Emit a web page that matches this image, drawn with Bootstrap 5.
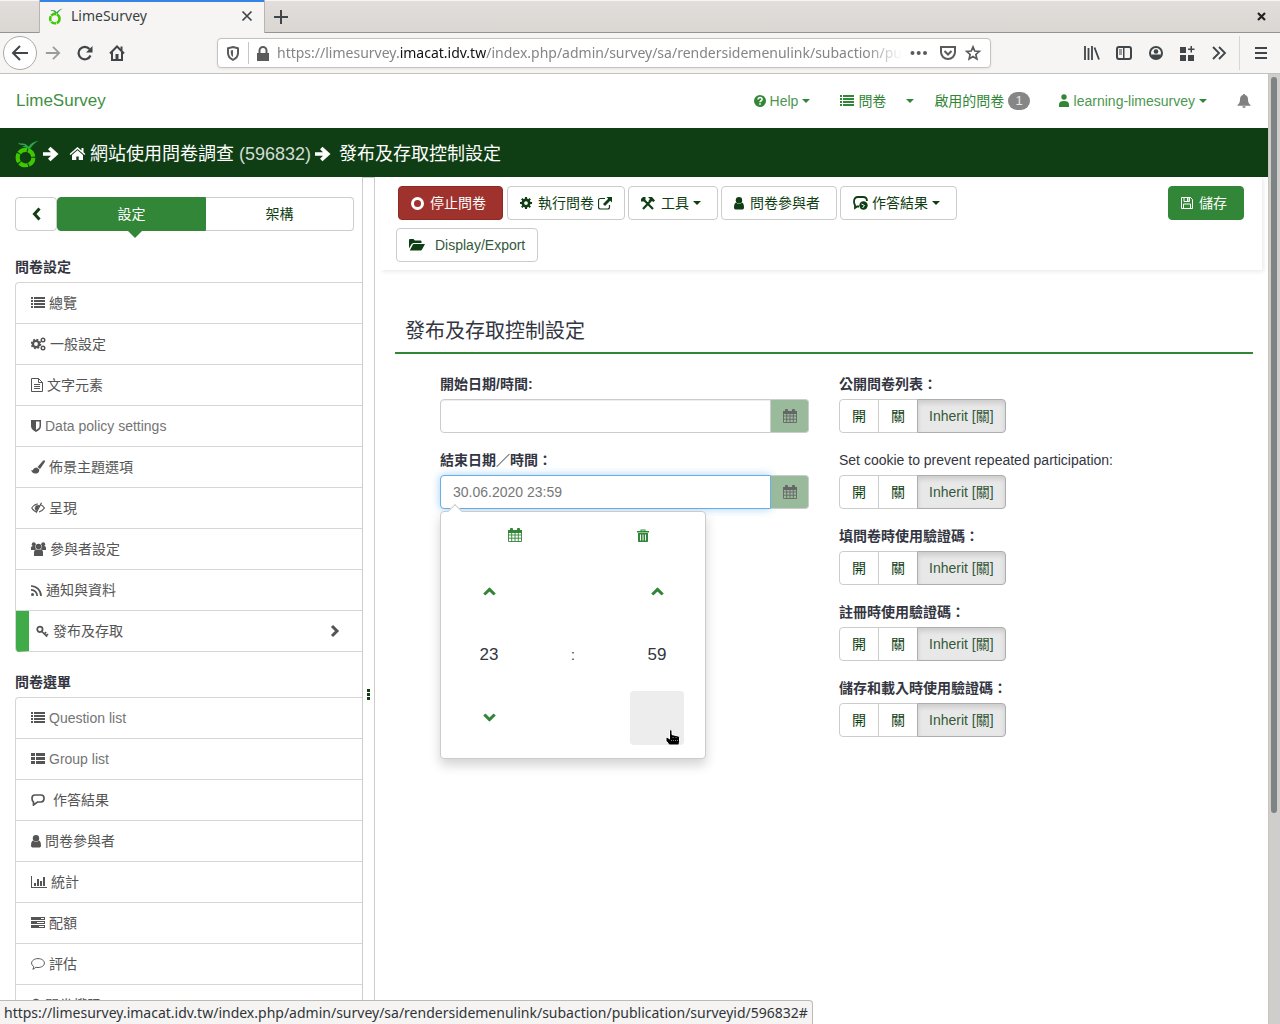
<!DOCTYPE html>
<html lang="zh-Hant">
<head>
<meta charset="utf-8">
<meta name="viewport" content="width=device-width, initial-scale=1">
<title>LimeSurvey</title>
<link href="https://cdn.jsdelivr.net/npm/bootstrap@5.3.0/dist/css/bootstrap.min.css" rel="stylesheet">
<style>
:root{--g:#328637;--dark:#103e14;--line:#ccc}
body{font:400 14px/20px "Liberation Sans","Noto Sans CJK TC",sans-serif;color:#333641;background:#fff}
svg{fill:currentColor;flex:none;display:block}
a{text-decoration:none}
/* browser frame */
.chrome-font{font-family:"Noto Sans","Noto Sans CJK TC",sans-serif;font-size:14px}
.tabstrip{height:33px;background:linear-gradient(#e1dedb,#dad6d2);border-bottom:1px solid #929595;border-top:1px solid #f6f5f4;padding:0 14px 0 39px}
.tab-item{width:226px;height:33px;margin-top:-1px;background:#f6f5f4;border:solid #b8b4b0;border-width:0 1px;box-shadow:inset 0 2px #3584e4;color:#3a3f42;padding:0 10px 0 8px;z-index:1}
.tabstrip button,.toolbar button{border:0;background:none;padding:0;color:#3f4548;flex:none}
.toolbar{height:41px;background:#f6f5f4;border-bottom:1px solid #c4c0bc;color:#4a4f52;padding:0 13px 0 3px}
.toolbar .back-btn{width:34px;height:34px;border:1px solid #aaa;border-radius:50%;background:#fff;display:grid;place-items:center}
.urlbar{height:30px;min-width:0;margin:0 93px 0 92px;background:#fff;border:1px solid #c6c1bc;border-radius:4px;color:#5b5b5b;box-shadow:0 1px 3px #0001}
.url-text{flex:1 1 0;color:#858585;white-space:nowrap;overflow:hidden;min-width:0;-webkit-mask:linear-gradient(90deg,#000 calc(100% - 36px),transparent);mask:linear-gradient(90deg,#000 calc(100% - 36px),transparent)}
.url-text b{font-weight:400;color:#111}
.vsep{width:1px;height:22px;background:#c9c5c1}
.vsep-tall{height:34px;margin:0 15px 0 12px;background:#d8d5d2}
.track{width:12px;background:#d0cecc;border-left:1px solid #c9c3b8;padding:3px 3px 0 2px}
.thumb{height:736px;background:#7e8384;border-radius:4px}
.status-tip{bottom:0;left:0;height:24px;line-height:24px;background:#f5f4f3;border:solid #bdb9b4;border-width:1px 1px 0 0;border-radius:0 4px 0 0;padding:0 4px;color:#303537;z-index:20;white-space:nowrap}
/* application */
.topnav{height:54px;padding:0 17px 0 16px;color:var(--g)}
.topnav a{color:var(--g);display:flex;align-items:center;gap:4px}
.topnav .latin{color:#4c9750}
.topnav .brand-link{font-size:17px;color:#3f8f44}
.tri{width:8px;height:4px}
.count-pill{background:#868686;border-radius:10px;font-size:13px;font-weight:400;padding:3px 7px;line-height:12px;height:18px;color:#e6e6e6}
.crumbs{height:49px;background:var(--dark);color:#fff;font-size:18px;padding:3px 0 0 14px}
.crumbs a{color:#fff}
.crumbs .latin{color:#d3dcd4}
.side{width:362px;padding:20px 0 0 15px;overflow:hidden}
.bt{height:34px;border:1px solid var(--line);border-radius:4px;background:#fff;color:var(--dark);font:inherit;padding:0 12px;display:inline-flex;align-items:center;justify-content:center;white-space:nowrap}
.bt:hover{color:var(--dark)}
.bt .latin{color:#34593a}
.bt-on{background:var(--g);border-color:var(--g);color:#fff}
.bt-stop{background:#9f322d;border-color:#8e2a26;color:#fff}
.seg{flex:1}
.seg-on::after{content:"";position:absolute;top:100%;left:50%;margin-left:-5px;border:8px solid transparent;border-top-color:var(--g);border-bottom:0}
.side-title{font-weight:700;margin:0;font-size:14px;line-height:20px}
.side-list{border:solid #d6d6d6;border-width:1px 0 0 1px;border-radius:4px 0 0 4px;overflow:hidden}
.side-list a{height:41px;border-bottom:1px solid #d6d6d6;display:flex;align-items:center;gap:4px;padding-left:15px;color:#555}
.side-list .latin{color:#747474}
.side-list a.cur{border-left:13px solid #41ab49;padding:0 22px 0 7px}
.splitter{width:13px;border:1px solid var(--line);border-bottom:0;color:var(--dark)}
.dots{margin-top:186px}
.actions{margin:0 6px 0 5px;padding:9px 18px 8px 16px;box-shadow:2px 2px 4px #00000014}
.ic{margin-right:6px}
.heading{font-size:20px;line-height:24px;font-weight:400;margin:49px 15px 0 20px;padding:0 10px 9px;border-bottom:2px solid var(--g)}
.form-grid{padding:20px 30px 0 65px}
.col-dates{flex:0 0 369px;margin-right:30px}
.lab{font-weight:700;display:block;line-height:20px;margin-bottom:5px}
.blk{margin-bottom:17px}
.form-grid .form-control{height:34px;border-color:var(--line);border-radius:4px 0 0 4px;font:inherit;color:#777;padding:0 12px;box-shadow:inset 0 1px 1px #00000013}
.form-grid .form-control.focused{border-color:#66afe9;box-shadow:0 0 8px #66afe999}
.date-btn{flex:none;width:38px;padding:0;background:#9aba9c;border-radius:0 4px 4px 0;border-left:0;color:#666}
.opt{padding:0 12px}
.opt-mid{margin-left:-1px}
.opt-last{padding:0 11px}
.btn-check:checked+.opt{background:#e8e8e8;border-color:#adadad;box-shadow:inset 0 3px 5px #00000020}
.picker{top:61px;left:0;width:266px;background:#fff;border:1px solid #ccc;border-radius:4px;box-shadow:0 6px 12px #0000002d;padding:0 6px 9px;z-index:5}
.picker::before{content:"";position:absolute;left:9px;top:-6px;width:10px;height:10px;background:#fff;border:solid #ccc;border-width:1px 0 0 1px;transform:rotate(45deg)}
.picker button{border:0;background:none;color:var(--g);padding:0;display:grid;place-items:center}
.pick-top{height:46px;padding-left:3px;margin:0 -7px 2px 0}
.pick-grid{display:grid;grid-template-columns:repeat(3,1fr);grid-auto-rows:63px;place-items:center}
.pick-grid button{width:54px;height:54px;border-radius:4px}
.pick-grid .hov{background:#ededed}
.num{font-size:17px}
.hand{left:224px;top:217px;z-index:6;color:#000}
</style>
</head>
<body class="vh-100 d-flex flex-column overflow-hidden position-relative">
<svg width="0" height="0" class="position-absolute">
<defs>
<symbol id="lime" viewBox="0 0 24 26"><path d="M11 5C7 4 5 5 4 2c3 2 5 0 8 2l2 2C16 3 19 1 24 0c-4 2-7 5-9 9-2-2-5-3-8-3z" fill="#2ba54a"/><circle cx="11" cy="16.500" r="7.500" fill="none" stroke="#3fc700" stroke-width="4" stroke-dasharray="8.400 1"/></symbol>
<symbol id="list" viewBox="0 0 14 12"><path d="M0 0h2v2H0zM3 0h11v2H3zM0 3h2v2H0zM3 3h11v2H3zM0 6h2v2H0zM3 6h11v2H3zM0 9h2v2H0zM3 9h11v2H3z"/></symbol>
<symbol id="thlist" viewBox="0 0 14 12"><path d="M0 0h4v3H0zM5 0h9v3H5zM0 4h4v3H0zM5 4h9v3H5zM0 8h4v3H0zM5 8h9v3H5z"/></symbol>
<symbol id="tri" viewBox="0 0 8 4"><path d="M0 0h8L4 4z"/></symbol>
<symbol id="user" viewBox="0 0 10 13"><circle cx="5" cy="3.200" r="3.200"/><path d="M2 5.500C.6 6.200 0 8 0 10.500 0 12 .8 12.600 2 12.600h6c1.200 0 2-.6 2-2.100 0-2.500-.6-4.300-2-5-.8.900-2 1.300-3 1.300s-2.200-.4-3-1.300z"/></symbol>
<symbol id="user2" viewBox="0 0 12 14"><circle cx="6" cy="3" r="2.700"/><path d="M1 13v-2.500C1 8 2.700 7 6 7s5 1 5 3.500V13z"/></symbol>
<symbol id="arrow" viewBox="0 0 16 16"><path d="M0 6.300h8L5 3.200 7.500.7 15.500 8l-8 7.300L5 12.800l3-3.100H0z"/></symbol>
<symbol id="home" viewBox="0 0 16 14"><path d="M8 0 0 7l1 1 7-6 7 6 1-1-2-1.800V1h-2v2.400zM8 3.300l-5.500 4.800V13H6.800V9.500h2.400V13h4.300V8.100z"/></symbol>
<symbol id="gear" viewBox="0 0 16 16"><circle cx="8" cy="8" r="4.300" fill="none" stroke="currentColor" stroke-width="3.600"/><path d="M6.600 0h2.800v3H6.600zM6.600 13h2.800v3H6.600zM0 6.600h3v2.800H0zM13 6.600h3v2.800h-3zM1.400 3.300l1.900-1.900 2 2-1.900 1.900zM10.700 12.600l1.900-1.900 2 2-1.900 1.900zM1.400 12.700l2-2 1.900 1.900-2 2zM10.700 3.400l2-2 1.900 1.900-2 2z"/></symbol>
<symbol id="cogs" viewBox="0 0 15 14"><circle cx="5" cy="7" r="3.100" fill="none" stroke="currentColor" stroke-width="2.400"/><circle cx="5" cy="7" r="4.600" fill="none" stroke="currentColor" stroke-width="1.400" stroke-dasharray="1.900 1.700"/><circle cx="12" cy="3" r="1.800" fill="none" stroke="currentColor" stroke-width="1.400"/><circle cx="12" cy="11" r="1.800" fill="none" stroke="currentColor" stroke-width="1.400"/></symbol>
<symbol id="file" viewBox="0 0 12 14"><path d="M.5.500h7l4 4v9H.5zM7.500.500v4h4M3 6.500h6M3 8.500h6M3 10.500h6" fill="none" stroke="currentColor"/></symbol>
<symbol id="shield" viewBox="0 0 10 12"><path d="M0 0h10v6c0 3-2 4.500-5 6-3-1.500-5-3-5-6zm5 1.500V10c2-1.200 3.500-2.200 3.500-4V1.500z" fill-rule="evenodd"/></symbol>
<symbol id="brush" viewBox="0 0 14 14"><path d="M13.500.3c.8.600.4 1.500 0 2.200L9 9 6.500 7 12 .8c.5-.5 1-.8 1.500-.5zM5.800 7.600l2.500 2c.2 2.800-1.800 4-4 4C2 13.600.6 12 0 9.800c1 .8 1.600.8 2.200-.2.700-1.300 2-2 3.600-2z"/></symbol>
<symbol id="eye" viewBox="0 0 14 12"><path d="M.7 6C3 2.800 5 2 7 2M6 10C3.500 9.700 2 8 .7 6M9 2.500C11 3 12.400 4.500 13.400 6 12 8 10.500 9.500 8 10M10.500.8 5 11M4.200 5.500c0 1.600.6 2.300 1.500 2.800" fill="none" stroke="currentColor" stroke-width="1.200"/><path d="M4.500 3.500 9 3 6 8.500C4.500 7.500 4 5.500 4.500 3.500z"/></symbol>
<symbol id="users" viewBox="0 0 15 14"><circle cx="7.500" cy="4.500" r="2.800"/><path d="M3 14V10.500c0-2 1-3 2.500-3h4c1.500 0 2.500 1 2.500 3V14z"/><circle cx="2.800" cy="2.200" r="2"/><circle cx="12.200" cy="2.200" r="2"/><path d="M0 8V6c0-1.300.7-2 2-2h2.300c0 2 .5 2.700 1 3.200L3.800 8zM15 8V6c0-1.300-.7-2-2-2h-2.300c0 2-.5 2.700-1 3.200l1.500.8z"/></symbol>
<symbol id="rss" viewBox="0 0 11 11"><circle cx="1.500" cy="9.500" r="1.500"/><path d="M0 4.800A6 6 0 0 1 6.200 11M0 1a10 10 0 0 1 10 10" fill="none" stroke="currentColor" stroke-width="1.700"/></symbol>
<symbol id="key" viewBox="0 0 14 13"><circle cx="4.200" cy="4.200" r="2.900" fill="none" stroke="currentColor" stroke-width="1.900"/><path d="m6 6.200 6 5.800M9 9l2-1.800M11 11l2-1.800" fill="none" stroke="currentColor" stroke-width="1.700"/></symbol>
<symbol id="bubble" viewBox="0 0 14 12"><path d="M4 1h6c2 0 3 1.200 3 3.200S12 8 10 8H6.500L2.500 11V8C1.500 7.300 1 6 1 4.200 1 2.200 2 1 4 1z" fill="none" stroke="currentColor" stroke-width="1.700"/></symbol>
<symbol id="bubble2" viewBox="0 0 14 12"><path d="M7 .6c3.600 0 6.400 2 6.400 4.500S10.600 9.500 7 9.500c-.8 0-1.500 0-2.200-.3C4 10.500 3 11 1.800 11.200c.7-.8 1-1.600 1-2.600C1.500 7.700.6 6.500.6 5.100.6 2.600 3.400.6 7 .6z" fill="none" stroke="currentColor"/></symbol>
<symbol id="chart" viewBox="0 0 16 12"><path d="M0 0h1v11h15v1H0zM3 7h2v3H3zM6 3h2v7H6zM9 5h2v5H9zM12 1h2v9h-2z"/></symbol>
<symbol id="tasks" viewBox="0 0 14 12"><path d="M0 0h14v3H0zm10 1v1h3V1zM0 4h14v3H0zm6 1v1h7V5zM0 8h14v3H0zm8 1v1h5V9z" fill-rule="evenodd"/></symbol>
<symbol id="lockp" viewBox="0 0 10 14"><path d="M1 7h8v6H1z"/><path d="M2.500 7V4a2.500 2.500 0 0 1 5 0v3" fill="none" stroke="currentColor" stroke-width="1.600"/></symbol>
<symbol id="cal" viewBox="0 0 14 14"><path d="M.5 3v10.500h13V3M.5 7h13M.5 10.200h13M3.700 4v9.500M7 4v9.500M10.300 4v9.500" fill="none" stroke="currentColor" stroke-width=".9"/><path d="M0 2h2V.8C2 .3 2.500 0 3.500 0S5 .3 5 .8V2h4V.8C9 .3 9.500 0 10.500 0S12 .3 12 .8V2h2v3H0z"/></symbol>
<symbol id="trash" viewBox="0 0 12 13"><path d="M0 2h3.500V.5h5V2H12v1.500H0zm4.500-.5V2h3v-.5zM1 4h10v8c0 .6-.4 1-1 1H2c-.6 0-1-.4-1-1zm2 1.500v6h1v-6zm2.500 0v6h1v-6zm2.500 0v6h1v-6z" fill-rule="evenodd"/></symbol>
<symbol id="up" viewBox="0 0 12 8"><path d="m1.200 6.800 4.800-4.800 4.800 4.800" fill="none" stroke="currentColor" stroke-width="2.800"/></symbol>
<symbol id="down" viewBox="0 0 12 8"><path d="M1.200 1.200 6 6l4.800-4.800" fill="none" stroke="currentColor" stroke-width="2.800"/></symbol>
</defs>
</svg>

<header class="chrome-font flex-shrink-0">
  <div class="tabstrip d-flex align-items-center">
    <div class="tab-item d-flex align-items-center">
      <svg width="15" height="17" viewBox="0 0 24 26" class="me-2"><use href="#lime"/></svg>LimeSurvey
      <button class="ms-auto" aria-label="Close tab"><svg width="14" height="14" viewBox="0 0 14 14"><path d="m2.500 2.500 9 9m0-9-9 9" stroke="currentColor" stroke-width="1.700"/></svg></button>
    </div>
    <button class="ms-2" aria-label="New tab"><svg width="16" height="16" viewBox="0 0 16 16"><path d="M8 1v14M1 8h14" stroke="currentColor" stroke-width="2"/></svg></button>
    <button class="ms-auto" aria-label="Close window"><svg width="9" height="9" viewBox="0 0 9 9"><path d="m1 1 7 7m0-7L1 8" stroke="#222" stroke-width="2.200"/></svg></button>
  </div>
  <div class="toolbar d-flex align-items-center">
    <button class="back-btn" aria-label="Back"><svg width="18" height="16" viewBox="0 0 18 16"><path d="M9 1 2 8l7 7M2 8h15" fill="none" stroke="currentColor" stroke-width="2"/></svg></button>
    <button class="ms-2 opacity-50" aria-label="Forward"><svg width="16" height="16" viewBox="0 0 18 16"><path d="m9 1 7 7-7 7m7-7H1" fill="none" stroke="currentColor" stroke-width="2"/></svg></button>
    <button class="ms-3" aria-label="Reload"><svg width="16" height="16" viewBox="0 0 16 16"><path d="M13.500 10.500A6.200 6.200 0 1 1 12.500 4" fill="none" stroke="currentColor" stroke-width="2.200"/><path d="M15.500 1v6.500H9z"/></svg></button>
    <button class="ms-3" aria-label="Home"><svg width="16" height="16" viewBox="0 0 16 16"><path d="m1 8.500 7-7 7 7M3 7v8h10V7" fill="none" stroke="currentColor" stroke-width="2"/><path d="M6.500 9h3v6h-3zM11.500 1.500h2v4h-2z"/></svg></button>
    <div class="urlbar d-flex align-items-center flex-grow-1 px-2">
      <svg width="14" height="15" viewBox="0 0 14 15"><path d="M7 1l5 1.300V7c0 3.500-2 5.500-5 6.800C4 12.500 2 10.500 2 7V2.300z" fill="none" stroke="currentColor" stroke-width="2"/><path d="M7 4v7C5.500 10 4.800 8.500 4.800 7V4.500z"/></svg>
      <span class="vsep mx-2"></span>
      <svg width="12" height="15" viewBox="0 0 12 15"><path d="M0 7h12v8H0z"/><path d="M2.500 8V4.500a3.500 3.500 0 0 1 7 0V8" fill="none" stroke="currentColor" stroke-width="2"/></svg>
      <div class="url-text ms-2" role="textbox" aria-label="Address">https://limesurvey.<b>imacat.idv.tw</b>/index.php/admin/survey/sa/rendersidemenulink/subaction/publication/surveyid/596832</div>
      <div class="d-flex align-items-center gap-2 ms-2">
        <svg width="18" height="4" viewBox="0 0 18 4" class="me-1"><circle cx="2.500" cy="2" r="2"/><circle cx="8.700" cy="2" r="2"/><circle cx="15" cy="2" r="2"/></svg>
        <svg width="16" height="14" viewBox="0 0 16 14"><path d="M1 1h14v5a7 7 0 0 1-14 0zM4.500 5 8 8.500 11.500 5" fill="none" stroke="currentColor" stroke-width="2"/></svg>
        <svg width="18" height="16" viewBox="1 0 20 16"><path d="m11 1.200 2 4.600 5 .5-3.800 3.300 1.100 5L11 12l-4.300 2.600 1.100-5L4 6.300l5-.5z" fill="none" stroke="currentColor" stroke-width="1.900"/></svg>
      </div>
    </div>
    <div class="d-flex align-items-center gap-3">
      <button aria-label="Library"><svg width="16" height="14" viewBox="0 0 16 14"><path d="M1 0v14M4.500 2v12M8 0v14M10.500 1.500l4.500 12" fill="none" stroke="currentColor" stroke-width="1.800"/></svg></button>
      <button aria-label="Sidebar"><svg width="16" height="14" viewBox="0 0 16 14"><rect x="1" y="1" width="14" height="12" rx="2" fill="none" stroke="currentColor" stroke-width="2"/><path d="M7 1h1.500v12H7zM3 3.500h3v1H3zM3 5.500h3v1H3zM3 7.500h3v1H3z"/></svg></button>
      <button aria-label="Account"><svg width="16" height="16" viewBox="0 0 16 16"><circle cx="8" cy="8" r="6" fill="none" stroke="currentColor" stroke-width="2"/><path d="M3 9.500h10C12 12.500 10 14 8 14s-4-1.500-5-4.500z"/><circle cx="8" cy="6.500" r="2.300"/></svg></button>
      <button aria-label="Extensions"><svg width="15" height="15" viewBox="0 0 15 15"><path d="M0 1h6v6H0zM0 9h6v6H0zM8 9h6v6H8zM10.500 0h1.500v2.500h2.500V4H12v2.500h-1.500V4H8V2.500h2.500z"/></svg></button>
      <button aria-label="More tools"><svg width="16" height="14" viewBox="0 0 16 14"><path d="m2 1 6 6-6 6M8 1l6 6-6 6" fill="none" stroke="currentColor" stroke-width="1.800"/></svg></button>
    </div>
    <span class="vsep vsep-tall"></span>
    <button aria-label="Menu"><svg width="12" height="14" viewBox="0 0 12 14"><path d="M0 1h12v2H0zM0 6h12v2H0zM0 11h12v2H0z"/></svg></button>
  </div>
</header>

<div class="d-flex flex-grow-1" style="min-height:0">
<div class="d-flex flex-column flex-grow-1" style="min-width:0">
  <nav class="topnav d-flex align-items-center flex-shrink-0">
    <a href="#" class="brand-link">LimeSurvey</a>
    <a href="#" class="ms-auto"><svg width="12" height="12" viewBox="0 0 12 12"><circle cx="6" cy="6" r="6"/><path d="M4 4.500C4 3.200 5 2.600 6 2.600s2.100.6 2.100 1.900S6 5.700 6 7.200" fill="none" stroke="#fff" stroke-width="1.500"/><path d="M5.200 8.300h1.600v1.500H5.200z" fill="#fff"/></svg><span class="latin">Help</span><svg class="tri"><use href="#tri"/></svg></a>
    <a href="#" style="margin-left:30px"><svg width="14" height="12"><use href="#list"/></svg>問卷</a>
    <a href="#" class="ms-3 ps-1" aria-label="問卷"><svg class="tri"><use href="#tri"/></svg></a>
    <a href="#" style="margin-left:20px">啟用的問卷<span class="badge count-pill">1</span></a>
    <a href="#" style="margin-left:28px"><svg width="12" height="14"><use href="#user2"/></svg><span class="latin">learning-limesurvey</span><svg class="tri"><use href="#tri"/></svg></a>
    <a href="#" style="margin-left:30px;color:#808080" aria-label="Notifications"><svg width="14" height="14" viewBox="0 0 14 14"><path d="M7 0c.6 0 1 .4 1 1 2 .4 3 2 3 4.300 0 3 .8 4.700 2.500 5.700v.7H.5V11C2.200 10 3 8.300 3 5.300 3 3 4 1.400 6 1c0-.6.4-1 1-1zM5.300 12.200h3.400a1.700 1.700 0 0 1-3.400 0z"/></svg></a>
  </nav>
  <div class="crumbs d-flex align-items-center flex-shrink-0">
    <svg width="25" height="28" viewBox="0 0 24 26"><use href="#lime"/></svg>
    <svg width="16" height="16" class="ms-1"><use href="#arrow"/></svg>
    <a href="#" class="d-flex align-items-center" style="margin-left:10px"><svg width="17" height="14" viewBox="0 0 16 14" class="me-1"><use href="#home"/></svg><span>網站使用問卷調查 <span class="latin">(596832)</span></span></a>
    <svg width="16" height="16" class="ms-1 me-2"><use href="#arrow"/></svg>
    <span>發布及存取控制設定</span>
  </div>

  <div class="d-flex flex-grow-1" style="min-height:0">
    <aside class="side flex-shrink-0">
      <div class="d-flex" style="margin-right:8px">
        <button class="bt" style="width:42px" aria-label="Collapse"><svg width="9" height="14" viewBox="0 0 9 14"><path d="M7.500 1.500 2.500 7l5 5.500" fill="none" stroke="currentColor" stroke-width="3"/></svg></button>
        <button class="bt bt-on seg seg-on rounded-end-0 position-relative">設定</button>
        <button class="bt seg rounded-start-0 border-start-0">架構</button>
      </div>
      <h2 class="side-title" style="margin:26px 0 5px">問卷設定</h2>
      <nav class="side-list">
        <a href="#"><svg width="14" height="12"><use href="#list"/></svg>總覽</a>
        <a href="#"><svg width="15" height="14"><use href="#cogs"/></svg>一般設定</a>
        <a href="#"><svg width="12" height="14"><use href="#file"/></svg>文字元素</a>
        <a href="#"><svg width="10" height="12"><use href="#shield"/></svg><span class="latin">Data policy settings</span></a>
        <a href="#"><svg width="14" height="14"><use href="#brush"/></svg>佈景主題選項</a>
        <a href="#"><svg width="14" height="12"><use href="#eye"/></svg>呈現</a>
        <a href="#"><svg width="15" height="14"><use href="#users"/></svg>參與者設定</a>
        <a href="#"><svg width="11" height="11"><use href="#rss"/></svg>通知與資料</a>
        <a href="#" class="cur"><svg width="13" height="13"><use href="#key"/></svg>發布及存取<svg class="ms-auto" width="10" height="14" viewBox="0 0 10 14"><path d="M2 2l5 5-5 5" fill="none" stroke="currentColor" stroke-width="3"/></svg></a>
      </nav>
      <h2 class="side-title" style="margin:20px 0 5px">問卷選單</h2>
      <nav class="side-list">
        <a href="#"><svg width="14" height="12"><use href="#list"/></svg><span class="latin">Question list</span></a>
        <a href="#"><svg width="14" height="12"><use href="#thlist"/></svg><span class="latin">Group list</span></a>
        <a href="#"><svg width="14" height="12" class="me-1"><use href="#bubble"/></svg>作答結果</a>
        <a href="#"><svg width="10" height="13"><use href="#user"/></svg>問卷參與者</a>
        <a href="#"><svg width="16" height="12"><use href="#chart"/></svg>統計</a>
        <a href="#"><svg width="14" height="12"><use href="#tasks"/></svg>配額</a>
        <a href="#"><svg width="14" height="12"><use href="#bubble2"/></svg>評估</a>
        <a href="#"><svg width="10" height="14"><use href="#lockp"/></svg>問卷權限</a>
      </nav>
    </aside>
    <div class="splitter flex-shrink-0 d-flex align-items-center justify-content-center"><svg width="3" height="11" viewBox="0 0 3 11" class="dots"><path d="M0 0h3v3H0zM0 4h3v3H0zM0 8h3v3H0z"/></svg></div>

    <main class="flex-grow-1" style="min-width:0">
      <div class="actions">
        <div class="d-flex" style="gap:3px">
          <button class="bt bt-stop" style="margin:0 1px 0 2px"><svg width="13" height="13" viewBox="0 0 13 13" class="ic"><circle cx="6.500" cy="6.500" r="5" fill="none" stroke="currentColor" stroke-width="3"/><path d="M4 4h5v5H4z" fill="#9f322d"/></svg><span class="me-1">停止問卷</span></button>
          <button class="bt"><svg width="12" height="12" viewBox="0 0 16 16" class="ic"><use href="#gear"/></svg>執行問卷<svg width="14" height="13" viewBox="0 0 14 13" class="ms-1 me-0"><path d="M7 1.500H2.500c-1 0-2 .7-2 2V10c0 1.300 1 2 2 2h7c1 0 2-.7 2-2V8" fill="none" stroke="currentColor" stroke-width="1.200"/><path d="M8.500 0H14v5.500l-1.800-1.800L7 9 5 7l5.200-5.200z"/></svg></button>
          <button class="bt"><svg width="14" height="13" viewBox="0 0 14 13" class="ic"><path d="m2 2 10 10M9 4.500 2 12" fill="none" stroke="currentColor" stroke-width="2.200"/><path d="M0 2 2 0h2.500v2.500L2.500 4.500H0zM7 0h4l3 3.500-1.500 1.500L11 4 9.500 5.500 7.500 3.500 9 2z"/></svg>工具<svg class="tri mx-1"><use href="#tri"/></svg></button>
          <button class="bt"><svg width="10" height="13" class="ic"><use href="#user"/></svg><span class="me-1">問卷參與者</span></button>
          <button class="bt"><svg width="15" height="14" viewBox="0 0 15 14" class="me-1"><path d="M6 10.500H4L2 12V9C1 8 1 7 1 5.500 1 2.500 2.500 1 5 1h5c2.500 0 4 1.200 4 4" fill="none" stroke="currentColor" stroke-width="1.800"/><circle cx="10.500" cy="9.500" r="4.200"/><path d="m8.500 8 3 1.500-2 2.500" stroke="#fff" fill="none"/></svg>作答結果<svg class="tri mx-1"><use href="#tri"/></svg></button>
          <button class="bt bt-on ms-auto"><svg width="12" height="12" viewBox="0 0 12 12" class="ic"><path d="M.5.500h9l2 2v9H.5zM3 .5v4h5.500v-4M2.500 11.500V7h7v4.500" fill="none" stroke="currentColor"/><path d="M6 1h1.500v3H6z"/></svg><span class="me-1">儲存</span></button>
        </div>
        <button class="bt mt-2"><svg width="16" height="12" viewBox="0 0 16 12"><path d="M0 9.500V1.200C0 .5.500 0 1.200 0h3.300l1.300 1.500h5.400c.7 0 1.300.5 1.300 1.200V4H5.500C4 4 3 4.500 2.300 5.500zM.8 11.500 3.500 6.200C3.900 5.400 4.500 5 5.500 5H16l-2.800 5.300c-.5.800-1 1.200-2 1.200z"/></svg><span class="latin" style="margin-left:10px">Display/Export</span></button>
      </div>
      <h1 class="heading">發布及存取控制設定</h1>
      <form class="form-grid d-flex" onsubmit="return false">
        <div class="col-dates">
          <div class="blk">
            <label class="lab" for="start">開始日期/時間:</label>
            <div class="d-flex"><input id="start" class="form-control"><button class="bt date-btn" aria-label="Pick start date"><svg width="14" height="14"><use href="#cal"/></svg></button></div>
          </div>
          <div class="blk position-relative">
            <label class="lab" for="end">結束日期／時間：</label>
            <div class="d-flex"><input id="end" class="form-control focused" value="30.06.2020 23:59"><button class="bt date-btn" aria-label="Pick end date"><svg width="14" height="14"><use href="#cal"/></svg></button></div>
            <div class="picker position-absolute">
              <div class="pick-top d-flex">
                <button class="flex-fill" aria-label="Date"><svg width="14" height="14"><use href="#cal"/></svg></button>
                <button class="flex-fill" aria-label="Clear"><svg width="12" height="13"><use href="#trash"/></svg></button>
              </div>
              <div class="pick-grid">
                <button aria-label="Hour up"><svg width="13" height="9" viewBox="0 0 12 8"><use href="#up"/></svg></button><span></span><button aria-label="Minute up"><svg width="13" height="9" viewBox="0 0 12 8"><use href="#up"/></svg></button>
                <span class="num">23</span><span>:</span><span class="num">59</span>
                <button aria-label="Hour down"><svg width="13" height="9" viewBox="0 0 12 8"><use href="#down"/></svg></button><span></span><button class="hov" aria-label="Minute down"></button>
              </div>
              <svg class="hand position-absolute" width="16" height="17" viewBox="0 0 16 17"><path d="M4.500 9V2c0-1.800 2.500-1.800 2.500 0v3.500l6 1.500c1.200.3 1.500 1 1.500 2v3.500c0 1.500-.5 2-.5 3.500H4c0-1-2-2.500-3-4.500v-2c0-1.500 1.500-1.500 3.500.5z" stroke="#fff"/><path d="M6 11.500h7M8 9V6.500M11 9V7.500" stroke="#888" stroke-dasharray="1 1"/></svg>
            </div>
          </div>
        </div>
        <div>
          <div class="blk"><span class="lab" id="l1">公開問卷列表：</span>
            <div class="btn-group" role="group" aria-labelledby="l1"><input type="radio" class="btn-check" name="r1" id="r1a"><label class="bt opt rounded-end-0" for="r1a">開</label><input type="radio" class="btn-check" name="r1" id="r1b"><label class="bt opt opt-mid rounded-0" for="r1b">關</label><input type="radio" class="btn-check" name="r1" id="r1c" checked><label class="bt opt opt-mid opt-last rounded-start-0" for="r1c"><span class="latin">Inherit [關]</span></label></div></div>
          <div class="blk"><span class="lab fw-normal" id="l2">Set cookie to prevent repeated participation:</span>
            <div class="btn-group" role="group" aria-labelledby="l2"><input type="radio" class="btn-check" name="r2" id="r2a"><label class="bt opt rounded-end-0" for="r2a">開</label><input type="radio" class="btn-check" name="r2" id="r2b"><label class="bt opt opt-mid rounded-0" for="r2b">關</label><input type="radio" class="btn-check" name="r2" id="r2c" checked><label class="bt opt opt-mid opt-last rounded-start-0" for="r2c"><span class="latin">Inherit [關]</span></label></div></div>
          <div class="blk"><span class="lab" id="l3">填問卷時使用驗證碼：</span>
            <div class="btn-group" role="group" aria-labelledby="l3"><input type="radio" class="btn-check" name="r3" id="r3a"><label class="bt opt rounded-end-0" for="r3a">開</label><input type="radio" class="btn-check" name="r3" id="r3b"><label class="bt opt opt-mid rounded-0" for="r3b">關</label><input type="radio" class="btn-check" name="r3" id="r3c" checked><label class="bt opt opt-mid opt-last rounded-start-0" for="r3c"><span class="latin">Inherit [關]</span></label></div></div>
          <div class="blk"><span class="lab" id="l4">註冊時使用驗證碼：</span>
            <div class="btn-group" role="group" aria-labelledby="l4"><input type="radio" class="btn-check" name="r4" id="r4a"><label class="bt opt rounded-end-0" for="r4a">開</label><input type="radio" class="btn-check" name="r4" id="r4b"><label class="bt opt opt-mid rounded-0" for="r4b">關</label><input type="radio" class="btn-check" name="r4" id="r4c" checked><label class="bt opt opt-mid opt-last rounded-start-0" for="r4c"><span class="latin">Inherit [關]</span></label></div></div>
          <div class="blk"><span class="lab" id="l5">儲存和載入時使用驗證碼：</span>
            <div class="btn-group" role="group" aria-labelledby="l5"><input type="radio" class="btn-check" name="r5" id="r5a"><label class="bt opt rounded-end-0" for="r5a">開</label><input type="radio" class="btn-check" name="r5" id="r5b"><label class="bt opt opt-mid rounded-0" for="r5b">關</label><input type="radio" class="btn-check" name="r5" id="r5c" checked><label class="bt opt opt-mid opt-last rounded-start-0" for="r5c"><span class="latin">Inherit [關]</span></label></div></div>
        </div>
      </form>
    </main>
  </div>
</div>
<div class="track flex-shrink-0"><div class="thumb"></div></div>
</div>
<div class="status-tip chrome-font position-absolute">https://limesurvey.imacat.idv.tw/index.php/admin/survey/sa/rendersidemenulink/subaction/publication/surveyid/596832#</div>
<script src="https://cdn.jsdelivr.net/npm/bootstrap@5.3.0/dist/js/bootstrap.bundle.min.js"></script>
</body>
</html>
